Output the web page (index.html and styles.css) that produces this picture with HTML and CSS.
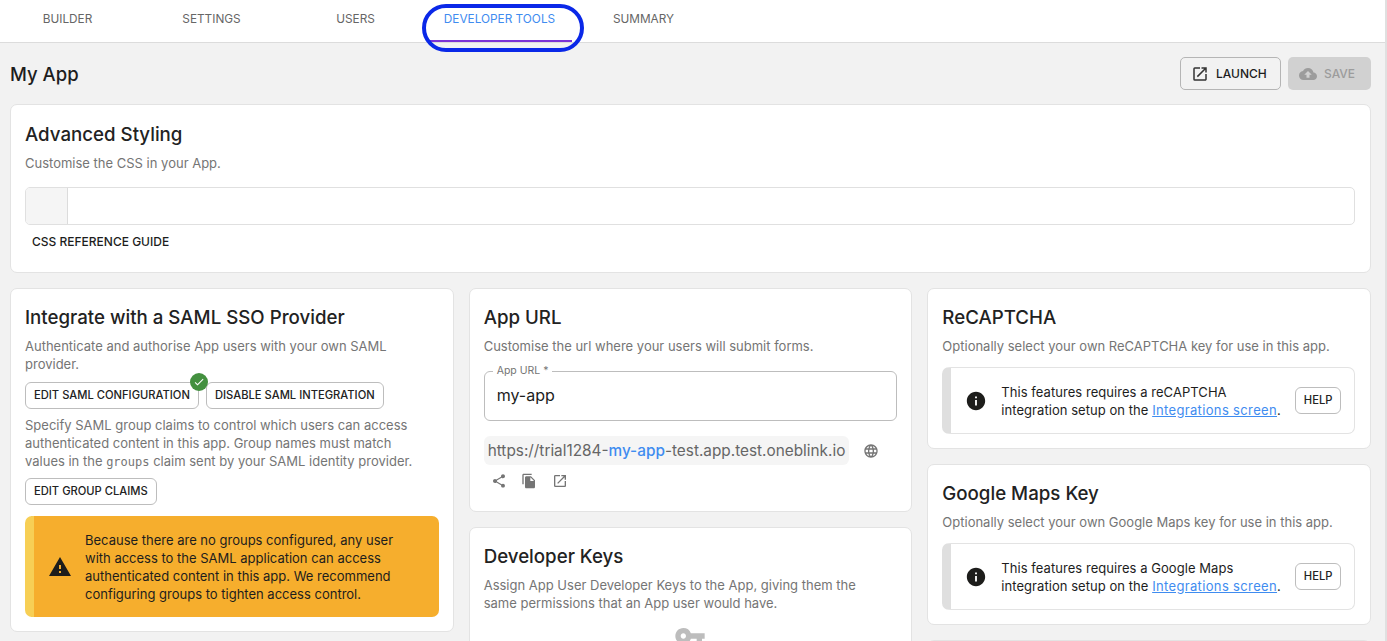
FILE: index.html
```html
<!doctype html>
<html>
<head>
<meta charset="utf-8">
<title>My App</title>
<link rel="stylesheet" href="styles.css">
</head>
<body>
<div class="tabs">
	<a class="tab">BUILDER</a>
	<a class="tab">SETTINGS</a>
	<a class="tab">USERS</a>
	<a class="tab active">DEVELOPER TOOLS</a>
	<a class="tab">SUMMARY</a>
	<div class="highlight"></div>
</div>
<div class="page">
	<div class="top_row">
		<h1>My App</h1>
		<div class="top_btns">
			<a class="btn btn_launch">
				<svg width="18" height="18" viewBox="0 0 24 24"><path fill="#333" d="M19 19H5V5h7V3H5a2 2 0 0 0-2 2v14a2 2 0 0 0 2 2h14c1.100 0 2-.9 2-2v-7h-2v7zM14 3v2h3.590l-9.830 9.830 1.410 1.410L19 6.410V10h2V3h-7z"/></svg>
				LAUNCH
			</a>
			<a class="btn btn_save">
				<svg width="18" height="18" viewBox="0 0 24 24"><path fill="#9c9c9c" d="M19.350 10.040C18.670 6.590 15.640 4 12 4 9.110 4 6.600 5.640 5.350 8.040 2.340 8.360 0 10.910 0 14c0 3.310 2.690 6 6 6h13c2.760 0 5-2.240 5-5 0-2.640-2.050-4.780-4.650-4.960zM14 13v4h-4v-4H7l5-5 5 5h-3z"/></svg>
				SAVE
			</a>
		</div>
	</div>

	<div class="card card_full">
		<h2>Advanced Styling</h2>
		<p class="desc">Customise the CSS in your App.</p>
		<div class="code_box"><div class="gutter"></div></div>
		<a class="text_btn">CSS REFERENCE GUIDE</a>
	</div>

	<div class="cols">
		<div class="col">
			<div class="card">
				<h2>Integrate with a SAML SSO Provider</h2>
				<p class="desc">Authenticate and authorise App users with your own SAML provider.</p>
				<div class="btn_row">
					<a class="small_btn badge_wrap">EDIT SAML CONFIGURATION
						<span class="badge"><svg width="12" height="12" viewBox="0 0 24 24"><path fill="#fff" d="M9 16.170 4.830 12l-1.420 1.410L9 19 21 7l-1.410-1.410z"/></svg></span>
					</a>
					<a class="small_btn">DISABLE SAML INTEGRATION</a>
				</div>
				<p class="desc desc_claims">Specify SAML group claims to control which users can access authenticated content in this app. Group names must match<br>values in the <code>groups</code> claim sent by your SAML identity provider.</p>
				<a class="small_btn btn_claims">EDIT GROUP CLAIMS</a>
				<div class="note note_warn">
					<svg width="24" height="24" viewBox="0 0 24 24"><path fill="#1d1d1b" d="M1 21h22L12 2 1 21zm12-3h-2v-2h2v2zm0-4h-2v-4h2v4z"/></svg>
					<p>Because there are no groups configured, any user with access to the SAML application can access authenticated content in this app. We recommend configuring groups to tighten access control.</p>
				</div>
			</div>
		</div>

		<div class="col">
			<div class="card card_url">
				<h2>App URL</h2>
				<p class="desc">Customise the url where your users will submit forms.</p>
				<div class="field">
					<span class="field_label">App URL *</span>
					my-app
				</div>
				<div class="url_row">
					<span class="url_chip">https://trial1284-<b>my-app</b>-test.app.test.oneblink.io</span>
					<svg width="16" height="16" viewBox="0 0 24 24"><path fill="#757575" d="M11.990 2C6.470 2 2 6.480 2 12s4.470 10 9.990 10C17.520 22 22 17.520 22 12S17.520 2 11.990 2zm6.930 6h-2.950a15.650 15.650 0 0 0-1.380-3.560A8.030 8.030 0 0 1 18.920 8zM12 4.040c.83 1.200 1.480 2.530 1.910 3.960h-3.820c.43-1.430 1.080-2.760 1.910-3.960zM4.260 14C4.100 13.360 4 12.690 4 12s.1-1.360.26-2h3.380c-.08.66-.14 1.320-.14 2s.06 1.340.14 2H4.260zm.82 2h2.950c.32 1.250.78 2.450 1.380 3.560A7.987 7.987 0 0 1 5.080 16zm2.950-8H5.080a7.987 7.987 0 0 1 4.330-3.560A15.650 15.650 0 0 0 8.030 8zM12 19.960c-.83-1.200-1.480-2.530-1.910-3.960h3.820c-.43 1.430-1.080 2.760-1.910 3.960zM14.340 14H9.660c-.09-.66-.16-1.320-.16-2s.07-1.350.16-2h4.680c.09.650.16 1.320.16 2s-.07 1.340-.16 2zm.25 5.560c.6-1.110 1.060-2.310 1.380-3.560h2.950a8.030 8.030 0 0 1-4.330 3.560zM16.360 14c.08-.66.14-1.320.14-2s-.06-1.340-.14-2h3.380c.16.640.26 1.310.26 2s-.1 1.360-.26 2h-3.380z"/></svg>
				</div>
				<div class="url_icons">
					<svg width="16" height="16" viewBox="0 0 24 24"><path fill="#757575" d="M18 16.080c-.76 0-1.440.3-1.960.77L8.910 12.700c.05-.23.09-.46.09-.7s-.04-.47-.09-.7l7.050-4.110c.54.5 1.250.81 2.040.81 1.660 0 3-1.340 3-3s-1.340-3-3-3-3 1.340-3 3c0 .24.040.47.090.7L8.040 9.810C7.500 9.310 6.790 9 6 9c-1.660 0-3 1.340-3 3s1.340 3 3 3c.79 0 1.500-.31 2.040-.81l7.120 4.160c-.05.21-.08.43-.08.65 0 1.610 1.310 2.920 2.920 2.920s2.920-1.310 2.920-2.920-1.310-2.920-2.920-2.920z"/></svg>
					<svg width="16" height="16" viewBox="0 0 24 24"><path fill="#757575" d="M16 1H4c-1.100 0-2 .9-2 2v14h2V3h12V1zm-1 4 6 6v10c0 1.100-.9 2-2 2H7.990C6.890 23 6 22.100 6 21l.01-14c0-1.100.89-2 1.990-2h7zm-1 7h5.500L14 6.500V12z"/></svg>
					<svg width="16" height="16" viewBox="0 0 24 24"><path fill="#757575" d="M19 19H5V5h7V3H5a2 2 0 0 0-2 2v14a2 2 0 0 0 2 2h14c1.100 0 2-.9 2-2v-7h-2v7zM14 3v2h3.590l-9.830 9.830 1.410 1.410L19 6.410V10h2V3h-7z"/></svg>
				</div>
			</div>
			<div class="card card_keys">
				<h2>Developer Keys</h2>
				<p class="desc">Assign App User Developer Keys to the App, giving them the<br>same permissions that an App user would have.</p>
				<div class="keys_empty">
					<svg width="32" height="32" viewBox="0 0 24 24"><path fill="#bdbdbd" d="M12.650 10A5.990 5.990 0 0 0 7 6c-3.310 0-6 2.690-6 6s2.690 6 6 6a5.990 5.990 0 0 0 5.650-4H17v4h4v-4h2v-4H12.650zM7 14c-1.100 0-2-.9-2-2s.9-2 2-2 2 .9 2 2-.9 2-2 2z"/></svg>
				</div>
			</div>
		</div>

		<div class="col">
			<div class="card">
				<h2>ReCAPTCHA</h2>
				<p class="desc">Optionally select your own ReCAPTCHA key for use in this app.</p>
				<div class="note note_info">
					<svg width="22" height="22" viewBox="0 0 24 24"><path fill="#1d1d1b" d="M12 2C6.480 2 2 6.480 2 12s4.480 10 10 10 10-4.480 10-10S17.520 2 12 2zm1 15h-2v-6h2v6zm0-8h-2V7h2v2z"/></svg>
					<p>This features requires a reCAPTCHA<br>integration setup on the <a class="link">Integrations screen</a>.</p>
					<a class="small_btn">HELP</a>
				</div>
			</div>
			<div class="card">
				<h2>Google Maps Key</h2>
				<p class="desc">Optionally select your own Google Maps key for use in this app.</p>
				<div class="note note_info">
					<svg width="22" height="22" viewBox="0 0 24 24"><path fill="#1d1d1b" d="M12 2C6.480 2 2 6.480 2 12s4.480 10 10 10 10-4.480 10-10S17.520 2 12 2zm1 15h-2v-6h2v6zm0-8h-2V7h2v2z"/></svg>
					<p>This features requires a Google Maps<br>integration setup on the <a class="link">Integrations screen</a>.</p>
					<a class="small_btn">HELP</a>
				</div>
			</div>
			<div class="card card_stub"></div>
		</div>
	</div>
</div>
</body>
</html>
```

FILE: styles.css
```css
*{margin:0; padding:0; box-sizing:border-box;}
html,body{height:641px; overflow:hidden;}
body{background:#f2f2f2; font-family:"Inter","Noto Sans",sans-serif; color:#1d1d1d; border-right:2px solid #e0e0e0;}

.tabs{height:43px; background:#fff; border-bottom:1px solid #dcdcdc; position:relative; display:flex;}
.tab{width:144px; height:42px; display:flex; align-items:center; justify-content:center; font-size:11.800px; color:#666; padding-bottom:3px; border-bottom:2px solid transparent; position:relative; left:-4.500px;}
.tab.active{color:#3f8cf0; border-bottom-color:#7b33d6;}
.highlight{position:absolute; left:422px; top:4px; width:162px; height:48px; border:4px solid #0a28e8; border-radius:24px;}

.page{height:598px; overflow:hidden; padding:0 14px 0 10px;}
.top_row{height:61px; display:flex; align-items:center; justify-content:space-between;}
h1{font-size:18.500px; font-weight:500;}
.top_btns{display:flex; gap:7px;}
.btn{height:33px; border-radius:5px; display:flex; align-items:center; font-size:12px; font-weight:500;}
.btn_launch{border:1px solid #b5b5b5; width:101px; padding-left:10px; gap:7px;}
.btn_save{background:#d1d1d1; color:#9c9c9c; width:83px; padding-left:11px; gap:7px;}

.card{background:#fff; border:1px solid #e3e3e3; border-radius:7px; padding:16px 15px 14px 14px;}
.card_full{height:169px;}
h2{font-size:18.700px; font-weight:500; line-height:27px; color:#222;}
.cols h2{margin-top:-1px;}
.desc{font-size:13px; line-height:18px; color:#757575; margin-top:6px;}

.code_box{height:38px; margin-top:15px; border:1px solid #e0e0e0; border-radius:5px; overflow:hidden;}
.gutter{width:42px; height:100%; background:#f5f5f5; border-right:1px solid #dcdcdc;}
.text_btn{display:block; font-size:12px; font-weight:500; margin:9px 0 0 7px; line-height:16px;}

.cols{display:grid; grid-template-columns:repeat(3,minmax(0,1fr)); gap:15px; margin-top:15px;}
.col{display:flex; flex-direction:column; gap:15px; min-width:0;}

.small_btn{display:inline-block; border:1px solid #bdbdbd; border-radius:6px; font-size:11.200px; font-weight:500; line-height:25px; padding:0 8px; color:#222; white-space:nowrap;}
.btn_row{display:flex; gap:7px; margin-top:9px;}
.badge_wrap{position:relative;}
.badge{position:absolute; right:-10px; top:-10px; width:18px; height:18px; border-radius:50%; background:#43903f; display:flex; align-items:center; justify-content:center;}
.desc_claims{margin-top:7px;}
code{font-family:"DejaVu Sans Mono",monospace; font-size:12px;}
.btn_claims{margin-top:7px;}

.note{display:flex; align-items:center; border-radius:7px;}
.note svg{flex-shrink:0;}
.note p{font-size:13px; line-height:18px;}
.note_warn{margin:11px -1px 0 0; height:101px; background:#f6ae2d; border-left:9px solid #f7cf55; padding:0 28px 0 14px; gap:13px;}
.note_info{margin-top:12px; height:67px; border:1px solid #e3e3e3; border-left:9px solid #dfdfdf; padding:0 14px; gap:14px;}
.note_info p{flex:1; white-space:nowrap; letter-spacing:.05px;}
.link{color:#3f8cf0; text-decoration:underline; letter-spacing:.35px;}

.card_url{height:224px;}
.field{height:50px; margin:16px -1px 0 0; border:1px solid #bdbdbd; border-radius:6px; position:relative; font-size:16px; line-height:46px; padding-left:12px;}
.field_label{position:absolute; left:8px; top:-8px; background:#fff; padding:0 4px; font-size:10.500px; line-height:14px; color:#757575;}
.url_row{display:flex; align-items:center; gap:14px; margin-top:15px;}
.url_chip{background:#f5f5f5; border-radius:6px; height:29px; line-height:29px; padding:0 4px; font-size:15.350px; color:#666;}
.url_chip b{font-weight:500; color:#3f8cf0;}
.url_icons{display:flex; gap:14.500px; margin:8px 0 0 7px;}

.card_keys{height:200px;}
.keys_empty{display:flex; justify-content:center; margin-top:8px;}
.card_stub{height:60px;}
```
